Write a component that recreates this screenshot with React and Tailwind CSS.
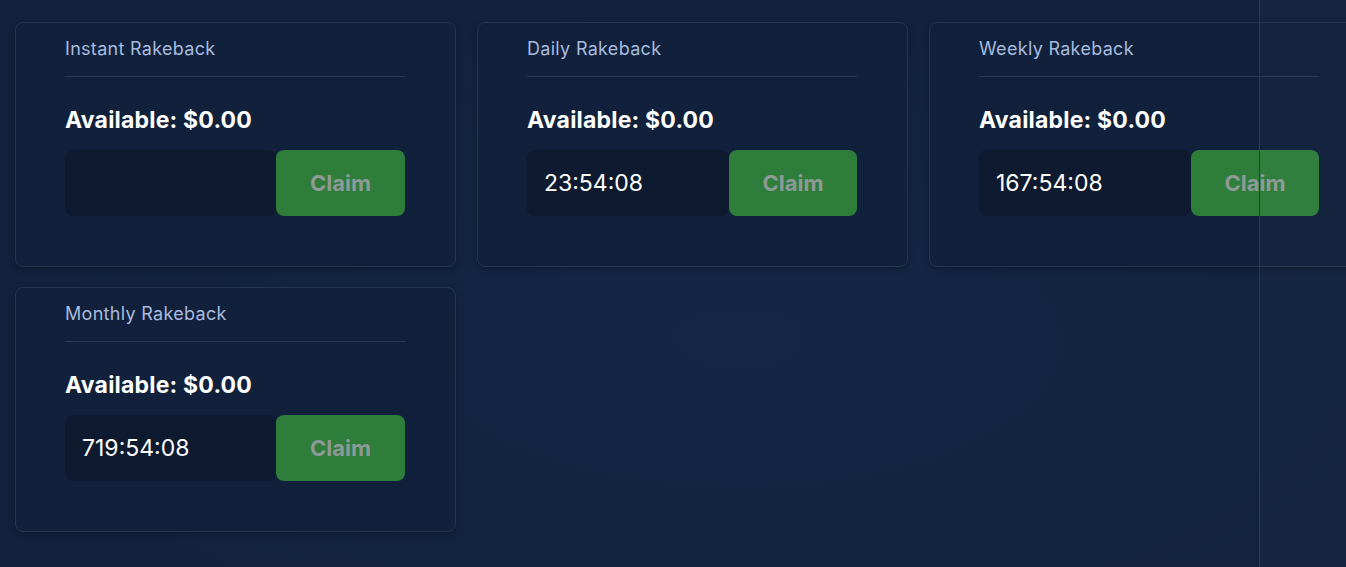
import React from 'react';

// ─── Data ─────────────────────────────────────────────────────────────────────
const CARDS = [
  { title: 'Instant Rakeback', timer: '',          width: 'w-[441px]', btn: 'w-[129px]' },
  { title: 'Daily Rakeback',   timer: '23:54:08',  width: 'w-[431px]', btn: 'w-[128px]' },
  { title: 'Weekly Rakeback',  timer: '167:54:08', width: 'w-[441px]', btn: 'w-[128px]' },
  { title: 'Monthly Rakeback', timer: '719:54:08', width: 'w-[441px]', btn: 'w-[129px]' },
];

// ─── Card ─────────────────────────────────────────────────────────────────────
function RakebackCard({ title, timer, width, btn }) {
  return (
    <div className={`${width} shrink-0 rounded-lg border border-[#26354f] bg-[#12213b] pl-[49px] pr-[50px] pt-[14px] pb-[50px] shadow-[0_2px_6px_rgba(0,0,0,0.25)]`}>
      <div className="border-b border-[#27375a] pb-[15px] text-[18px] leading-6 tracking-[0.3px] text-[#a7bbdf]">
        {title}
      </div>
      <div className="mt-[28px] text-[23px] font-bold leading-[30px] tracking-[0.2px] text-white">
        Available: $0.00
      </div>
      <div className="mt-[15px] flex h-[66px]">
        <div className="flex flex-1 items-center rounded-lg bg-[#0e1a30] pl-[17px] text-[23px] text-white">
          {timer}
        </div>
        <button className={`${btn} shrink-0 rounded-lg bg-[#2e7d3b] text-[22px] font-bold text-[#8e9a97]`}>
          Claim
        </button>
      </div>
    </div>
  );
}

// ─── Page ─────────────────────────────────────────────────────────────────────
export default function App() {
  return (
    <div
      className="relative h-[567px] w-[1346px] overflow-hidden bg-[#13243f] bg-[radial-gradient(ellipse_at_55%_60%,#142745_0%,#12223d_70%)]"
      style={{ fontFamily: 'Inter, "Noto Sans", sans-serif' }}
    >
      <div className="flex w-[1400px] flex-wrap gap-x-[21px] gap-y-[20px] pl-[15px] pt-[22px]">
        {CARDS.map(c => (
          <RakebackCard key={c.title} {...c} />
        ))}
      </div>

      {/* right side panel edge */}
      <div className="absolute inset-y-0 left-[1259px] right-0 border-l border-[#2a3b58] bg-white/[0.015]" />
    </div>
  );
}
